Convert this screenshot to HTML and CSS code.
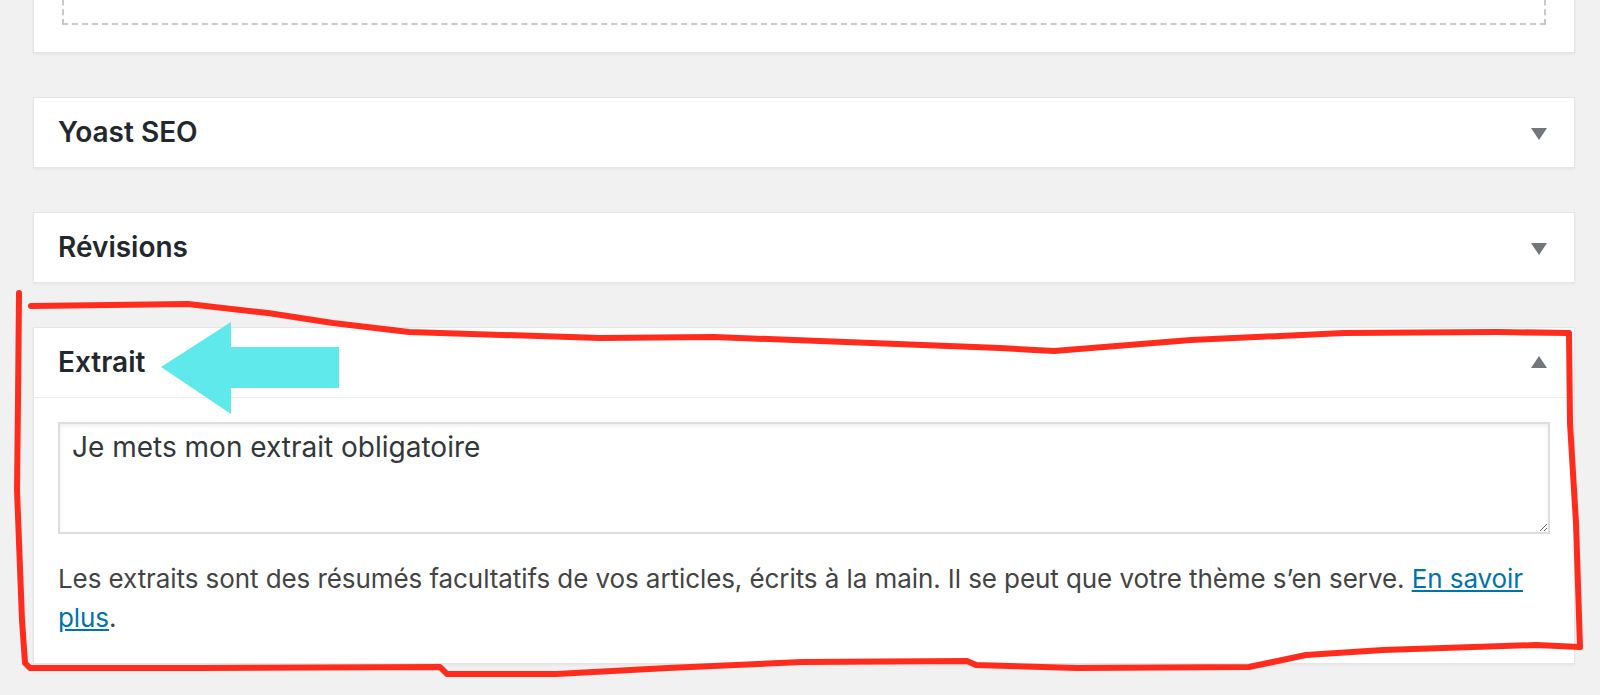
FILE: index.html
```html
<!DOCTYPE html>
<html lang="fr">
<head>
    <meta charset="UTF-8">
    <title>Extrait</title>
    <link rel="stylesheet" href="styles.css">
</head>
<body>
    <div class="metaboxes">
        <div class="postbox top-box">
            <div class="empty-zone"></div>
        </div>

        <div class="postbox">
            <div class="hndle">
                <h2>Yoast SEO</h2>
                <span class="toggle down"></span>
            </div>
        </div>

        <div class="postbox">
            <div class="hndle">
                <h2>Révisions</h2>
                <span class="toggle down"></span>
            </div>
        </div>

        <div class="postbox open">
            <div class="hndle">
                <h2>Extrait</h2>
                <span class="toggle up"></span>
            </div>
            <div class="inside">
                <textarea class="excerpt">Je mets mon extrait obligatoire</textarea>
                <p>Les extraits sont des résumés facultatifs de vos articles, écrits à la main. Il se peut que votre thème s’en serve. <a href="#">En savoir plus</a>.</p>
            </div>
        </div>
    </div>

    <!-- annotations drawn over the screenshot -->
    <svg class="annotations" width="1600" height="695" viewBox="0 0 1600 695">
        <path class="scribble" d="M19 293 L18 400 L17 490 L22 620 L25 663 L30 668
            L200 668 L440 667 L447 674 L556 674 L668 668 L802 662 L967 661 L976 665
            L1077 668 L1249 667 L1306 655 L1383 650 L1536 645 L1580 647
            L1576 523 L1570 423 L1569 333 L1497 332 L1344 333 L1191 340 L1054 351
            L1000 348 L714 337 L600 338 L409 332 L333 323 L268 313 L188 304 L31 306"/>
        <polygon class="arrow" points="161,367 231,322 231,347 339,347 339,388 231,388 231,414"/>
    </svg>
</body>
</html>
```

FILE: styles.css
```css
body {
    margin: 0;
    background-color: #f1f1f1;
    font-family: Inter, "Open Sans", sans-serif;
    color: #444;
    position: relative;
    height: 695px;
    overflow: hidden;
}

.metaboxes {
    width: 1542px;
    margin-left: 33px;
}

.postbox {
    background-color: #fff;
    border: 1px solid #e5e5e5;
    box-shadow: 0 2px 2px rgba(0, 0, 0, 0.04);
    margin-bottom: 44px;
}

.top-box {
    margin-top: -90px;
    padding-top: 20px;
}

.empty-zone {
    height: 90px;
    margin: 0 28px 27px 28px;
    border: 2px dashed #c9c9c9;
}

.hndle {
    display: flex;
    align-items: center;
    justify-content: space-between;
    padding: 15px 27px 15px 24px;
}

.hndle h2 {
    margin: 0;
    font-size: 28px;
    line-height: 39px;
    font-weight: 600;
    color: #23282d;
}

.toggle {
    width: 0;
    height: 0;
    border-left: 8px solid transparent;
    border-right: 8px solid transparent;
}

.toggle.down {
    border-top: 12px solid #72777c;
    margin-top: 2px;
}

.toggle.up {
    border-bottom: 12px solid #72777c;
    margin-top: -2px;
}

.open .hndle {
    border-bottom: 1px solid #eee;
}

.inside {
    padding: 0 24px;
}

.excerpt {
    display: block;
    box-sizing: border-box;
    width: 100%;
    height: 112px;
    margin: 24px 0 0 0;
    padding: 4px 12px;
    border: 2px solid #ddd;
    box-shadow: inset 0 2px 4px rgba(0, 0, 0, 0.07);
    font-family: Inter, "Open Sans", sans-serif;
    font-size: 28px;
    line-height: 39px;
    color: #32373c;
    resize: vertical;
}

.inside p {
    margin: 25px 0 26px 0;
    font-size: 26px;
    line-height: 39px;
    letter-spacing: -0.08px;
}

.inside a {
    color: #0073aa;
}

.annotations {
    position: absolute;
    left: 0;
    top: 0;
    pointer-events: none;
}

.scribble {
    fill: none;
    stroke: #ff2b1c;
    stroke-width: 6;
    stroke-linejoin: round;
    stroke-linecap: round;
}

.arrow {
    fill: #5fe9ea;
}
```
